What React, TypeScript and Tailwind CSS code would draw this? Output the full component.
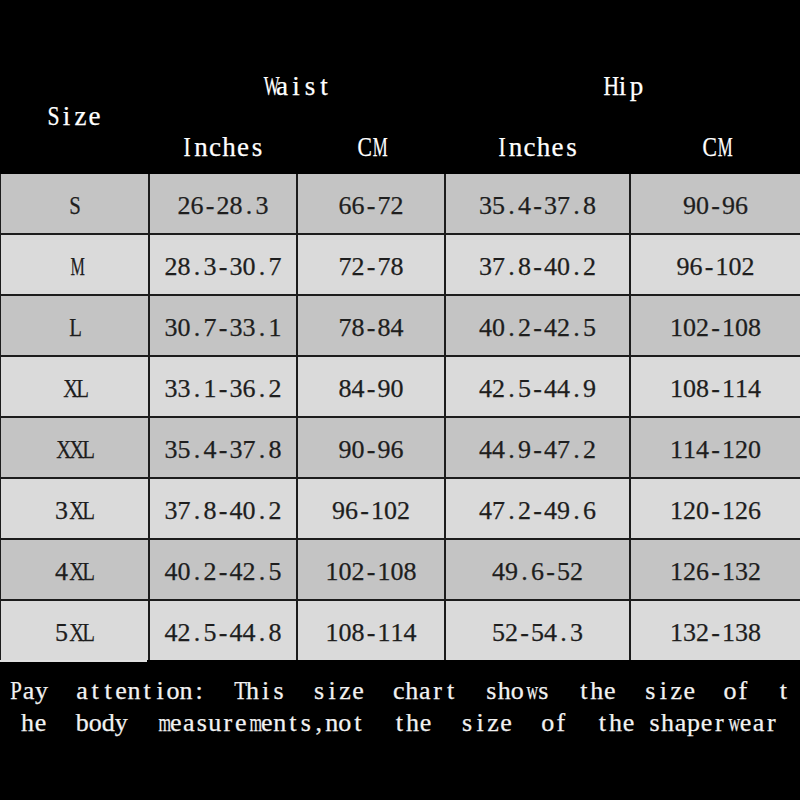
const rows = [
  ["S", "26-28.3", "66-72", "35.4-37.8", "90-96"],
  ["M", "28.3-30.7", "72-78", "37.8-40.2", "96-102"],
  ["L", "30.7-33.1", "78-84", "40.2-42.5", "102-108"],
  ["XL", "33.1-36.2", "84-90", "42.5-44.9", "108-114"],
  ["XXL", "35.4-37.8", "90-96", "44.9-47.2", "114-120"],
  ["3XL", "37.8-40.2", "96-102", "47.2-49.6", "120-126"],
  ["4XL", "40.2-42.5", "102-108", "49.6-52", "126-132"],
  ["5XL", "42.5-44.8", "108-114", "52-54.3", "132-138"],
];

const line1 = ["Pay", "attention:", "This", "size", "chart", "shows", "the", "size", "of", "t"];
const line2 = ["he", "body", "measurements,not", "the", "size", "of", "the shaperwear"];

const cols = "grid grid-cols-[147px_146px_146px_183px_1fr] gap-x-[2px]";

// half-width serif glyphs, like the old CJK system fonts: every char gets the same cell
function Mono({ text, wide }: { text: string; wide?: boolean }) {
  return (
    <span className="inline-flex">
      {text.split("").map((ch, i) => {
        let sq = "";
        if ("MWmw".includes(ch)) sq = "scale-x-[0.62]";
        else if (/[A-Z]/.test(ch)) sq = "scale-x-[0.8]";
        return (
          <span
            key={i}
            className={`inline-block text-center whitespace-pre ${wide ? "w-[14px]" : "w-[13px]"} ${sq}`}
          >
            {ch}
          </span>
        );
      })}
    </span>
  );
}

export default function App() {
  return (
    <div className="w-[800px] h-[800px] bg-black overflow-hidden font-['Liberation_Serif',serif] text-[26px] leading-none [-webkit-text-stroke:0.25px_currentColor]">
      {/* header */}
      <div className={`${cols} grid-rows-[56px_60px_58px] h-[174px] text-white text-[27px]`}>
        <div className="row-start-2 row-span-2 col-start-1 flex items-center justify-center pt-[2px]">
          <Mono text="Size" wide />
        </div>
        <div className="row-start-2 col-start-2 col-span-2 flex items-center justify-center">
          <Mono text="Waist" wide />
        </div>
        <div className="row-start-2 col-start-4 col-span-2 flex items-center justify-center">
          <Mono text="Hip" wide />
        </div>
        <div className="row-start-3 col-start-2 flex items-center justify-center pt-[4px]">
          <Mono text="Inches" wide />
        </div>
        <div className="row-start-3 col-start-3 flex items-center justify-center pt-[4px]">
          <Mono text="CM" wide />
        </div>
        <div className="row-start-3 col-start-4 flex items-center justify-center pt-[4px]">
          <Mono text="Inches" wide />
        </div>
        <div className="row-start-3 col-start-5 flex items-center justify-center pt-[4px]">
          <Mono text="CM" wide />
        </div>
      </div>

      {/* table */}
      <div className="flex flex-col gap-y-[2px] bg-[#1c1c1c] pl-px">
        {rows.map((r, i) => (
          <div key={r[0]} className={`${cols} h-[59px]`}>
            {r.map((c, j) => (
              <div
                key={j}
                className={`flex items-center justify-center pt-[4px] text-[#1e1e1e] ${i % 2 === 0 ? "bg-[#c4c4c4]" : "bg-[#dadada]"}`}
              >
                <Mono text={c} />
              </div>
            ))}
          </div>
        ))}
      </div>
      <div className="h-[2px] bg-[#e0e0e0] w-[147px]" />

      {/* note */}
      <div className="text-[#f2f2f2] pt-[13px] flex flex-col">
        <div className="flex justify-between h-[32px] items-center pl-[9px] pr-[10px]">
          {line1.map((w, i) => (
            <Mono key={i} text={w} />
          ))}
        </div>
        <div className="flex justify-between h-[32px] items-center pl-[21px] pr-[22px]">
          {line2.map((w, i) => (
            <Mono key={i} text={w} />
          ))}
        </div>
      </div>
    </div>
  );
}
